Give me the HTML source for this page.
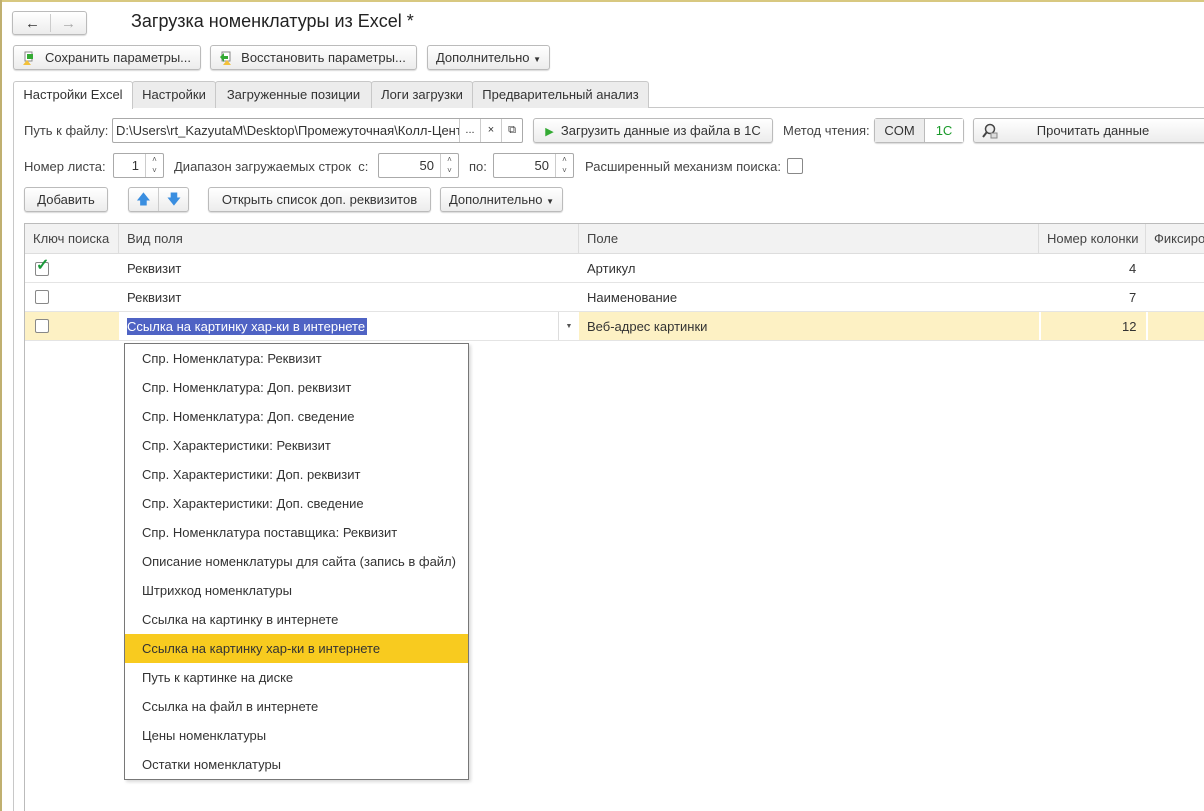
<!DOCTYPE html>
<html><head><meta charset="utf-8"><style>
*{box-sizing:border-box;margin:0;padding:0}
body{width:1204px;height:811px;overflow:hidden;background:#fff;font-family:"Liberation Sans",sans-serif;font-size:13px;color:#333;position:relative}
.a{position:absolute}
.btn{position:absolute;border:1px solid #bbb;border-radius:3px;background:linear-gradient(#fff,#ececec);box-shadow:0 1px 1px rgba(0,0,0,.15);height:25px;line-height:23px;text-align:center;color:#333;white-space:nowrap}
.inp{position:absolute;border:1px solid #aaa;height:25px;background:#fff;line-height:23px;border-radius:2px}
.tab{position:absolute;top:81px;height:27px;border:1px solid #c8c8c8;border-bottom:none;background:#ececec;line-height:26px;text-align:center;border-radius:3px 3px 0 0}
.spin{position:absolute;top:0;right:0;width:18px;height:23px;border-left:1px solid #ccc;font-size:8px;color:#555;text-align:center;line-height:11px}
.cb{position:absolute;width:14px;height:14px;border:1px solid #888;border-radius:2px;background:#fff}
.th{position:absolute;top:0;height:30px;line-height:30px;padding-left:8px;color:#444;border-right:1px solid #ddd}
.row{position:absolute;left:0;right:0;height:29px;border-bottom:1px solid #e4e4e4;line-height:29px}
.it{height:29px;line-height:29px;padding-left:17px;color:#333}
</style></head><body>
<div class="a" style="left:0;top:0;width:1204px;height:2px;background:#d8c880"></div>
<div class="a" style="left:0;top:0;width:2px;height:811px;background:#c0b070"></div>

<div class="btn" style="left:12px;top:11px;width:75px;height:24px;"><span class="a" style="left:12px;top:0;font-size:15px;color:#333">&#8592;</span><span class="a" style="left:37px;top:2px;width:1px;height:18px;background:#ccc"></span><span class="a" style="left:48px;top:0;font-size:15px;color:#aaa">&#8594;</span></div>
<div class="a" style="left:131px;top:11px;font-size:18px;color:#222">Загрузка номенклатуры из Excel *</div>

<div class="btn" style="left:13px;top:45px;width:188px;"><span class="a" style="left:8px;top:4px;width:14px;height:15px;"><svg width="14" height="15"><rect x="3" y="1" width="7" height="9" fill="#fff" stroke="#888"/><path d="M5 3h6v5H5z" fill="#3a3"/><path d="M1 14l4-5 4 5z" fill="#f3c13a"/></svg></span><span style="padding-left:22px">Сохранить параметры...</span></div>
<div class="btn" style="left:210px;top:45px;width:207px;"><span class="a" style="left:8px;top:4px;"><svg width="14" height="15"><rect x="3" y="1" width="8" height="9" fill="#fff" stroke="#888"/><path d="M1 6l4-4v3h4v3H5v3z" fill="#3a3"/><path d="M4 14l4-5 4 5z" fill="#f3c13a"/></svg></span><span style="padding-left:20px">Восстановить параметры...</span></div>
<div class="btn" style="left:427px;top:45px;width:123px;">Дополнительно <span style="font-size:8px">&#9660;</span></div>

<div class="a" style="left:13px;top:107px;width:1191px;height:1px;background:#c8c8c8"></div>
<div class="a" style="left:13px;top:107px;width:1px;height:704px;background:#c8c8c8"></div>
<div class="tab" style="left:13px;width:120px;background:#fff;height:28px">Настройки Excel</div>
<div class="tab" style="left:132px;width:84px">Настройки</div>
<div class="tab" style="left:215px;width:157px">Загруженные позиции</div>
<div class="tab" style="left:371px;width:102px">Логи загрузки</div>
<div class="tab" style="left:472px;width:177px">Предварительный анализ</div>

<div class="a" style="left:24px;top:123px;color:#444">Путь к файлу:</div>
<div class="inp" style="left:112px;top:118px;width:411px;"><span class="a" style="left:3px;top:0;width:343px;overflow:hidden;white-space:nowrap">D:\Users\rt_KazyutaM\Desktop\Промежуточная\Колл-Центр\</span><span class="a" style="left:346px;top:0;width:21px;height:23px;border-left:1px solid #ccc;text-align:center;font-size:11px">...</span><span class="a" style="left:367px;top:0;width:21px;height:23px;border-left:1px solid #ccc;text-align:center;font-size:11px">×</span><span class="a" style="left:388px;top:0;width:21px;height:23px;border-left:1px solid #ccc;text-align:center;font-size:11px">&#10697;</span></div>
<div class="btn" style="left:533px;top:118px;width:240px;"><span style="color:#3a3;font-size:11px">&#9654;</span>&nbsp; Загрузить данные из файла в 1С</div>
<div class="a" style="left:783px;top:123px;color:#444">Метод чтения:</div>
<div class="btn" style="left:874px;top:118px;width:90px;padding:0"><span class="a" style="left:0;top:0;width:50px;height:23px;background:#ececec;border-right:1px solid #bbb">COM</span><span class="a" style="left:50px;top:0;width:38px;color:#1a9a2a;background:#fff">1С</span></div>
<div class="btn" style="left:973px;top:118px;width:240px;"><span class="a" style="left:8px;top:4px"><svg width="16" height="16"><circle cx="8" cy="6" r="4.5" fill="#eee" stroke="#444" stroke-width="1.5"/><path d="M4.5 9.5L1 14" stroke="#444" stroke-width="2"/><rect x="9" y="10" width="6" height="5" fill="#ddd" stroke="#888"/></svg></span>Прочитать данные</div>

<div class="a" style="left:24px;top:159px;color:#444">Номер листа:</div>
<div class="inp" style="left:113px;top:153px;width:51px;"><span class="a" style="right:24px;top:0">1</span><div class="spin">˄<br>˅</div></div>
<div class="a" style="left:174px;top:159px;color:#444">Диапазон загружаемых строк &nbsp;с:</div>
<div class="inp" style="left:378px;top:153px;width:81px;"><span class="a" style="right:24px;top:0">50</span><div class="spin">˄<br>˅</div></div>
<div class="a" style="left:469px;top:159px;color:#444">по:</div>
<div class="inp" style="left:493px;top:153px;width:81px;"><span class="a" style="right:24px;top:0">50</span><div class="spin">˄<br>˅</div></div>
<div class="a" style="left:585px;top:159px;color:#444">Расширенный механизм поиска:</div>
<div class="cb" style="left:787px;top:158px;width:16px;height:16px"></div>

<div class="btn" style="left:24px;top:187px;width:84px;">Добавить</div>
<div class="btn" style="left:128px;top:187px;width:61px;padding:0"><span class="a" style="left:0;top:0;width:30px;height:23px;border-right:1px solid #ccc;color:#3a8ee0;font-size:14px">&#129093;</span><span class="a" style="left:30px;top:0;width:30px;color:#3a8ee0;font-size:14px">&#129095;</span></div>
<div class="btn" style="left:208px;top:187px;width:223px;">Открыть список доп. реквизитов</div>
<div class="btn" style="left:440px;top:187px;width:123px;">Дополнительно <span style="font-size:8px">&#9660;</span></div>

<div class="a" style="left:24px;top:223px;width:1180px;height:588px;border:1px solid #bbb;border-right:none;border-bottom:none">
 <div class="a" style="left:0;top:0;width:1180px;height:30px;background:#f2f2f2;border-bottom:1px solid #ddd"></div>
 <div class="th" style="left:0;width:94px">Ключ поиска</div>
 <div class="th" style="left:94px;width:460px">Вид поля</div>
 <div class="th" style="left:554px;width:460px">Поле</div>
 <div class="th" style="left:1014px;width:107px">Номер колонки</div>
 <div class="th" style="left:1121px;width:80px;border:none">Фиксиро</div>
 <div class="row" style="top:30px"><div class="cb" style="left:10px;top:8px"></div><span class="a" style="left:11px;top:-3px;color:#1a9a3a;font-size:16px;font-weight:bold">&#10003;</span><span class="a" style="left:102px">Реквизит</span><span class="a" style="left:562px">Артикул</span><span class="a" style="left:1104px">4</span></div>
 <div class="row" style="top:59px"><div class="cb" style="left:10px;top:7px"></div><span class="a" style="left:102px">Реквизит</span><span class="a" style="left:562px">Наименование</span><span class="a" style="left:1104px">7</span></div>
 <div class="row" style="top:88px;background:#fdf1c4"><div class="a" style="left:94px;top:0;width:460px;height:28px;background:#fff"></div><div class="cb" style="left:10px;top:7px"></div><span class="a" style="left:102px;top:6px;height:17px;line-height:17px;background:#4f63c4;color:#fff;padding-right:2px">Ссылка на картинку хар-ки в интернете</span><span class="a" style="left:533px;top:0;width:21px;height:28px;border-left:1px solid #ddd;text-align:center;font-size:7px;color:#555">&#9660;</span><span class="a" style="left:562px">Веб-адрес картинки</span><span class="a" style="left:1014px;top:0;height:28px;width:2px;background:#fff"></span><span class="a" style="left:1097px">12</span><span class="a" style="left:1121px;top:0;height:28px;width:2px;background:#fff"></span></div>
</div>

<div class="a" style="left:124px;top:343px;width:345px;height:437px;border:1px solid #777;background:#fff;box-shadow:2px 2px 3px rgba(0,0,0,.15);padding-top:0">
 <div class="it">Спр. Номенклатура: Реквизит</div>
 <div class="it">Спр. Номенклатура: Доп. реквизит</div>
 <div class="it">Спр. Номенклатура: Доп. сведение</div>
 <div class="it">Спр. Характеристики: Реквизит</div>
 <div class="it">Спр. Характеристики: Доп. реквизит</div>
 <div class="it">Спр. Характеристики: Доп. сведение</div>
 <div class="it">Спр. Номенклатура поставщика: Реквизит</div>
 <div class="it">Описание номенклатуры для сайта (запись в файл)</div>
 <div class="it">Штрихкод номенклатуры</div>
 <div class="it">Ссылка на картинку в интернете</div>
 <div class="it" style="background:#f8cb1f">Ссылка на картинку хар-ки в интернете</div>
 <div class="it">Путь к картинке на диске</div>
 <div class="it">Ссылка на файл в интернете</div>
 <div class="it">Цены номенклатуры</div>
 <div class="it">Остатки номенклатуры</div>
</div>
</body></html>
